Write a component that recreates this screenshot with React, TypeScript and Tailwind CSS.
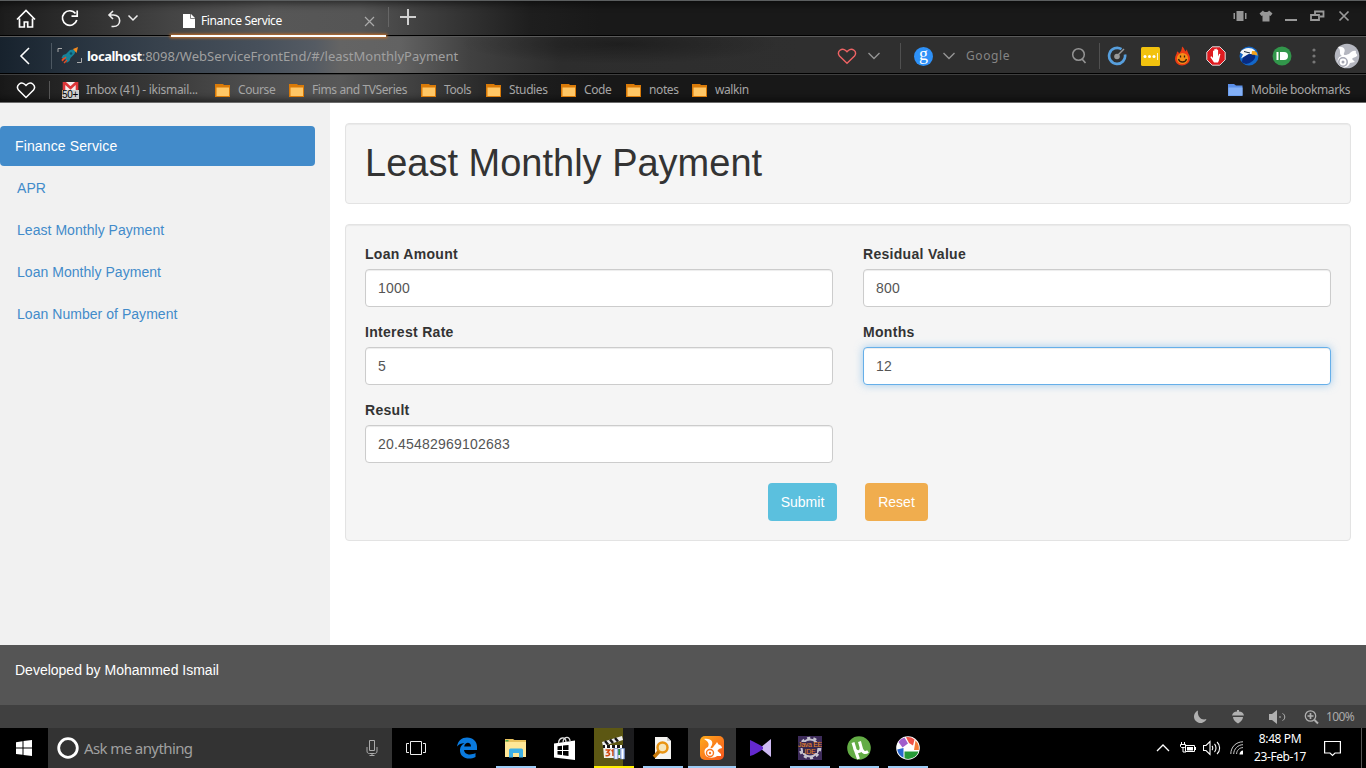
import React from "react";

const UI = "font-['Noto_Sans',sans-serif]";

type IcoProps = { w: number; h: number; c?: string; children: React.ReactNode };
function Ico({ w, h, c = "", children }: IcoProps) {
  return (
    <svg width={w} height={h} viewBox={`0 0 ${w} ${h}`} fill="none" className={"shrink-0 " + c}>
      {children}
    </svg>
  );
}

function TabStrip() {
  return (
    <div className="relative z-10 flex h-[36px] items-start border-t border-b border-t-[#5c5f60] border-b-black bg-[linear-gradient(90deg,#1c1c1c_0,#2c2c2c_70px,#444_170px,#575757_270px,#555_360px,#3d3d3d_430px,#1e1e1e_530px,#191919_600px)] shadow-[inset_0_8px_8px_-6px_#0009]">
      <Ico w={20} h={20} c="mt-[8px] ml-[16px]">
        <path d="M1 10.500 10 1.500l9 9M3.500 9.500v8.500h4.800v-5h3.400v5h4.800V9.500" stroke="#fff" strokeWidth="1.700" />
      </Ico>
      <Ico w={20} h={20} c="mt-[8px] ml-[24px]">
        <path d="M15.500 4.500A7.300 7.300 0 1 0 16.800 11" stroke="#fff" strokeWidth="1.700" />
        <path d="M17.200 1.500v5.700h-5.700" stroke="#fff" strokeWidth="1.700" />
      </Ico>
      <Ico w={14} h={18} c="mt-[9px] ml-[27px]">
        <path d="M6 1 2 5l4 4M2 5h4.500c8.500 0 8 11.500 0 11.500H4.500" stroke="#eee" strokeWidth="1.600" />
      </Ico>
      <Ico w={12} h={8} c="mt-[13px] ml-[6px]">
        <path d="m1.500 1.500 4.500 4.500 4.500-4.500" stroke="#eee" strokeWidth="1.500" />
      </Ico>
      <div className="ml-[32px] flex h-[36px] w-[215px] flex-col">
        <div className="flex h-[34px] items-start">
          <Ico w={13} h={15} c="mt-[13px] ml-[11px]">
            <path d="M1 0h8l4 4v10H1z" fill="#fff" />
            <path d="M8.500 0v4.500H13" stroke="#666" strokeWidth=".8" />
          </Ico>
          <span className="mt-[11px] ml-[6px] w-[150px] text-[12px] leading-[17px] tracking-[-0.38px] whitespace-nowrap text-white">Finance Service</span>
          <Ico w={11} h={11} c="mt-[15px] ml-[13px]">
            <path d="m1 1 9 9M10 1l-9 9" stroke="#aaa" strokeWidth="1.200" />
          </Ico>
        </div>
        <div className="h-[2px] w-full bg-white shadow-[0_0_3px_1px_#c76f26]" />
      </div>
      <div className="mt-[6px] ml-[2px] h-[20px] w-px bg-[#666]" />
      <Ico w={16} h={16} c="mt-[8px] ml-[11px]">
        <path d="M8 0v16M0 8h16" stroke="#d0d0d0" strokeWidth="2" />
      </Ico>
      <div className="mt-[8px] mr-[16px] ml-auto flex items-start">
        <Ico w={14} h={14} c="-ml-px">
          <path d="M3.500 2h7v10h-7zM.5 4H2v6H.5zM12 4h1.500v6H12z" fill="#969696" />
        </Ico>
        <Ico w={14} h={14} c="ml-[12px]">
          <path d="M4 1.500c1 2 5 2 6 0l3.500 3-2 2.500L10.500 6.500V12.500h-7V6.500L2.500 7 .5 4.500z" fill="#969696" />
        </Ico>
        <Ico w={13} h={14} c="ml-[12px]">
          <path d="M0 11h12" stroke="#999" strokeWidth="2" />
        </Ico>
        <Ico w={15} h={14} c="ml-[12px]">
          <path d="M1 6h8v5H1zM5 5V2.500h8.500v5H10" stroke="#999" strokeWidth="1.800" />
        </Ico>
        <Ico w={12} h={14} c="ml-[13px]">
          <path d="m1.500 2.500 9 9M10.500 2.500l-9 9" stroke="#999" strokeWidth="1.700" />
        </Ico>
      </div>
    </div>
  );
}

function Chevron({ c }: { c: string }) {
  return (
    <Ico w={14} h={10} c={c}>
      <path d="m1.500 2 5.500 5.500L12.500 2" stroke="#949494" strokeWidth="1.400" />
    </Ico>
  );
}

function AddressBar() {
  return (
    <div className="flex h-[38px] items-center border-b border-black bg-[radial-gradient(ellipse_160px_20px_at_620px_8px,#0005,transparent),linear-gradient(90deg,#17222d_0,#26323e_70px,#38424d_160px,#47505b_260px,#555b63_315px,#646464_340px,#626262_400px,#414141_470px,#2d2d2d_560px,#2f2f2f_800px)] pt-[3px] shadow-[inset_0_1px_0_#5a5a5a]">
      <Ico w={12} h={20} c="ml-[19px]">
        <path d="m10 2-8 8 8 8" stroke="#fff" strokeWidth="1.600" />
      </Ico>
      <div className="ml-[20px] h-[26px] w-px bg-[#4d5862]" />
      <Ico w={26} h={20} c="ml-[5px]">
        <path d="M1 6V2.500h4M20 16.500h4.500V12" stroke="#aaa" strokeWidth="1" />
        <path d="m19 3-6 1-4 4-3 1-1.500 3 3 0 2 3 0 2 3-2 1-3 4-4z" fill="#16839a" />
        <path d="m16 3 5-2-1.500 6z" fill="#f58a1f" />
        <path d="m9 11-4 4M10 14l-3 3M7 12l-2 2" stroke="#e34d26" strokeWidth="1.500" />
        <circle cx="14" cy="7.500" r="1.300" fill="#0c4e64" />
      </Ico>
      <span className="ml-[4px] w-[400px] text-[13px] leading-[18px] tracking-[0.02px] whitespace-nowrap text-[#a0a0a0]">
        <b className="tracking-[-0.5px] text-white">localhost</b>:8098/WebServiceFrontEnd/#/leastMonthlyPayment
      </span>
      <div className="ml-auto flex items-center">
        <Ico w={20} h={18}>
          <path d="M10 16.200 2.500 9C-.8 4.500 5 .2 8.700 3.500L10 4.700l1.300-1.200C15 .2 20.800 4.500 17.500 9z" stroke="#ee6364" strokeWidth="1.400" />
        </Ico>
        <Chevron c="ml-[10px]" />
        <div className="ml-[19px] h-[26px] w-px bg-[#505050]" />
        <div className="ml-[13px] flex size-[19px] justify-center rounded-full bg-[#2e91f8] font-['Liberation_Serif',serif] text-[18px] leading-[14px] text-white">g</div>
        <Chevron c="ml-[9px]" />
        <span className="ml-[10px] w-[104px] text-[12px] tracking-[0.6px] text-[#858585]">Google</span>
        <Ico w={16} h={18} c="ml-[1px]">
          <circle cx="7.500" cy="7.500" r="5.800" stroke="#949494" strokeWidth="1.500" />
          <path d="m11 12 3.500 4" stroke="#949494" strokeWidth="1.600" />
        </Ico>
        <div className="ml-[12px] h-[26px] w-px bg-[#505050]" />
        <Ico w={20} h={20} c="ml-[7px]">
          <path d="M14.500 3.200A8 8 0 1 0 18 8.500" stroke="#579fdd" strokeWidth="2.700" />
          <circle cx="10" cy="10.500" r="2.800" fill="#999" />
          <path d="m11 9 6-6" stroke="#999" strokeWidth="1.500" />
        </Ico>
        <Ico w={19} h={19} c="ml-[14px]">
          <rect width="19" height="19" rx="1.500" fill="#f2c20e" />
          <circle cx="4" cy="9.500" r="1.500" fill="#fff" />
          <circle cx="8.500" cy="9.500" r="1.500" fill="#fff" />
          <circle cx="13" cy="9.500" r="1.500" fill="#fff" />
          <path d="M16 6h.8v7H16z" fill="#fff" />
        </Ico>
        <Ico w={17} h={20} c="ml-[14px]">
          <path d="M8 .5c3 2 2 4 4 5 0-1 .5-2 1-2 0 3 3 5 3 9 0 4-4 7-8 7s-7-3-7-7c0-3 2-4 2-7 1 0 2 1 2 2 2-2 3-4 3-7z" fill="#ed3a14" />
          <circle cx="8.500" cy="12.500" r="5.600" fill="#f58e18" />
          <path d="M6.500 9.500v2M10.500 9.500v2M4.500 13c1 4 7 4 8 0" stroke="#37230c" strokeWidth="1.300" />
        </Ico>
        <Ico w={20} h={20} c="ml-[15px]">
          <path d="M6.200.8h7.600l5.400 5.400v7.600l-5.400 5.400H6.200L.8 13.800V6.200z" fill="#df1b20" stroke="#ddd" />
          <path d="M8 16.500 4.300 11l1.200-.8L7 12V5q.6-.9 1.200 0v4-5.500q.7-.9 1.300 0V9 3q.7-.9 1.300 0v6-5q.7-.9 1.300 0v6.500l1-2.500q1-.7 1.300.3l-1.500 6.200L12 16.500z" fill="#fff" />
        </Ico>
        <Ico w={20} h={20} c="ml-[13px]">
          <circle cx="10" cy="10" r="9.500" fill="#1367c9" />
          <path d="M3 16.500C3 10 8 7 15 8.500c4 3-3 9-8 9.500z" fill="#072b82" />
          <path d="M1 6.500c3-5 11-6 15-2l-1.500 3.500-5 0L2 12.500l2-4z" fill="#f3f5f6" />
          <path d="M13 5c4-.5 5.500 1 5.500 5-2-2-4-1-6-1.500z" fill="#f6a21b" />
          <path d="m5 5.500 6 1.500" stroke="#17283b" />
        </Ico>
        <Ico w={20} h={20} c="ml-[13px]">
          <circle cx="10" cy="10" r="9.500" fill="#32964b" />
          <path d="M4.500 6h2v8h-2zM8 6h4a4 4 0 0 1 0 8H8z" fill="#fff" />
        </Ico>
        <Ico w={4} h={18} c="ml-[20px]">
          <circle cx="2" cy="3" r="1.600" fill="#777" />
          <circle cx="2" cy="9" r="1.600" fill="#777" />
          <circle cx="2" cy="15" r="1.600" fill="#777" />
        </Ico>
        <Ico w={26} h={26} c="mr-[6px] ml-[18px]">
          <circle cx="13" cy="13" r="12.300" fill="#b5b7c0" />
          <path d="M4 4c6-1 8 3 6 6-1 3 2 2 5 1 2-2 4-4 7-3-1 3 2 3 1 5-2 2-4 1-5 3l3 3-5 1c-1 4-6 6-10 3-5-5-1-10 2-10-4-2 0-5-4-9z" fill="#fff" />
          <circle cx="9" cy="19" r="4.200" stroke="#a5a7b3" strokeWidth="1.500" />
          <circle cx="9" cy="19" r="1.500" fill="#a5a7b3" />
        </Ico>
      </div>
    </div>
  );
}

const folders: [string, string][] = [
  ["Course", "w-[74px]"],
  ["Fims and TVSeries", "w-[132px]"],
  ["Tools", "w-[65px]"],
  ["Studies", "w-[75px]"],
  ["Code", "w-[65px]"],
  ["notes", "w-[66px]"],
  ["walkin", "w-[74px]"],
];

function BookmarkBar() {
  return (
    <div className="flex h-[29px] items-center border-y border-t-[#3f3f3f] border-b-[#6c6c6c] bg-[linear-gradient(90deg,#191919_0,#242424_60px,#373737_150px,#505050_260px,#585858_340px,#3b3b3b_430px,#1e1e1e_520px,#181818_600px)] pt-[3px] text-[12px] text-[#a5a5a5] shadow-[inset_0_-8px_8px_-6px_#0009]">
      <Ico w={20} h={18} c="ml-[16px]">
        <path d="M10 16.500 2.500 9C-.8 4.500 5 0 8.700 3.300L10 4.500l1.300-1.200C15 0 20.800 4.500 17.500 9z" stroke="#fff" strokeWidth="1.500" />
      </Ico>
      <div className="ml-[13px] h-[18px] w-px bg-[#555]" />
      <div className="ml-[12px] flex h-[17px] w-[18px] flex-col">
        <Ico w={18} h={8}>
          <path d="M1 0h15v8H1z" fill="#f5eeee" />
          <path d="M2 8V0l6.500 6L15 0v8" stroke="#dc3639" strokeWidth="2.600" />
        </Ico>
        <span className="h-[9px] w-[17px] bg-[#ccc] font-['Liberation_Sans',sans-serif] text-[10px] leading-[9px] tracking-[-0.3px] text-black">50+</span>
      </div>
      <span className="ml-[6px] w-[129px] tracking-[-0.28px] whitespace-nowrap">Inbox (41) - ikismail...</span>
      {folders.map(([name, width]) => (
        <div key={name} className={"flex shrink-0 items-center " + width}>
          <Ico w={16} h={14}>
            <path d="M0 1h8l1 1h6v12H0z" fill="#d97a08" />
            <path d="M1.500 4.500h12.500V13H1.500z" fill="#ffc766" />
          </Ico>
          <span className="ml-[7px] tracking-[-0.4px] whitespace-nowrap">{name}</span>
        </div>
      ))}
      <div className="mr-[16px] ml-auto flex items-center">
        <Ico w={16} h={14}>
          <path d="M0 1h6l2 1.500h6.500V13H0z" fill="#5b8fe8" />
          <path d="M.5 4.500h14V12.500H.5z" fill="#83b0f6" />
        </Ico>
        <span className="ml-[7px] w-[99px] tracking-[-0.36px] whitespace-nowrap">Mobile bookmarks</span>
      </div>
    </div>
  );
}

function Field({ label, value, focus = false }: { label: string; value: string; focus?: boolean }) {
  return (
    <label className="block w-[468px]">
      <span className="mb-[5px] block leading-5 font-bold tracking-[0.3px]">{label}</span>
      <input
        defaultValue={value}
        className={
          "block h-[38px] w-full rounded-[4px] border bg-white px-3 text-[14px] tracking-[0.2px] text-[#555] outline-none " +
          (focus
            ? "border-[#66afe9] shadow-[inset_0_1px_1px_rgba(0,0,0,.075),0_0_8px_rgba(102,175,233,.6)]"
            : "border-[#ccc] shadow-[inset_0_1px_1px_rgba(0,0,0,.075)]")
        }
      />
    </label>
  );
}

function Page() {
  return (
    <div className="flex h-[542px] bg-white font-['Liberation_Sans',Arial,sans-serif] text-[14px] text-[#333]">
      <nav className="w-[330px] bg-[#f1f1f1] pt-[23px] text-[#428bca]">
        <div className="flex h-[40px] w-[315px] items-center rounded-[4px] bg-[#428bca] pl-[15px] tracking-[0.13px] text-white">Finance Service</div>
        {["APR", "Least Monthly Payment", "Loan Monthly Payment", "Loan Number of Payment"].map((t) => (
          <div key={t} className="mt-[2px] flex h-[40px] items-center pt-px pl-[17px] tracking-[0.04px]">{t}</div>
        ))}
      </nav>
      <main className="w-[1036px] px-[15px] pt-[20px]">
        <div className="h-[81px] rounded-[4px] border border-[#e3e3e3] bg-[#f5f5f5] px-[19px] pt-[18px] shadow-[inset_0_1px_1px_rgba(0,0,0,.05)]">
          <h1 className="text-[38px] leading-[42px]">Least Monthly Payment</h1>
        </div>
        <div className="mt-[20px] h-[317px] rounded-[4px] border border-[#e3e3e3] bg-[#f5f5f5] px-[19px] pt-[19px] shadow-[inset_0_1px_1px_rgba(0,0,0,.05)]">
          <div className="grid grid-cols-[468px_468px] gap-x-[30px] gap-y-[15px]">
            <Field label="Loan Amount" value="1000" />
            <Field label="Residual Value" value="800" />
            <Field label="Interest Rate" value="5" />
            <Field label="Months" value="12" focus />
            <Field label="Result" value="20.45482969102683" />
          </div>
          <div className="mt-[20px] ml-[403px] flex gap-[28px] text-white">
            <button className="h-[38px] w-[69px] rounded-[4px] bg-[#5bc0de]">Submit</button>
            <button className="h-[38px] w-[63px] rounded-[4px] bg-[#f0ad4e]">Reset</button>
          </div>
        </div>
      </main>
    </div>
  );
}

function StatusBar() {
  return (
    <div className="flex h-[23px] items-center justify-end bg-[#404040] pr-[11px] text-[12px] text-[#aaa]">
      <Ico w={14} h={14}>
        <path d="M5 .5A6.500 6.500 0 1 0 13.500 9C8 11 4 6 5 .5z" fill="#b0b0b0" />
      </Ico>
      <Ico w={12} h={16} c="ml-[25px]">
        <path d="M5 1h2v1.500c2.500 0 4.500 1.500 5 4H0C.5 4 2.500 2.500 5 2.500zM1 8h10c0 3-2.500 5-5 6.500C3.500 13 1 11 1 8z" fill="#b0b0b0" />
      </Ico>
      <Ico w={19} h={16} c="ml-[24px]">
        <path d="M1 5h3l5-4v14l-5-4H1z" fill="#b0b0b0" />
        <path d="M11 8h2M14.500 4.500c3 1 3 6 0 7" stroke="#b0b0b0" />
      </Ico>
      <Ico w={15} h={16} c="ml-[17px]">
        <circle cx="6.500" cy="7" r="5.200" stroke="#b0b0b0" strokeWidth="1.300" />
        <path d="M6.500 4v6M3.500 7h6" stroke="#b0b0b0" strokeWidth="1.700" />
        <path d="m10.500 11 3.500 3.500" stroke="#b0b0b0" strokeWidth="2" />
      </Ico>
      <span className="ml-[7px] w-[29px] tracking-[-0.6px]">100%</span>
    </div>
  );
}

type AppProps = { children: React.ReactNode; c: string };
function TaskApp({ children, c }: AppProps) {
  return <div className={"flex h-[40px] shrink-0 items-center justify-center border-b-2 pt-[2px] " + c}>{children}</div>;
}

function Taskbar() {
  return (
    <div className="flex h-[40px] items-center bg-black">
      <div className="flex w-[48px] justify-center">
        <Ico w={16} h={16}>
          <path d="M0 2.200 6.500 1.200v6.200H0zM7.500 1.100 16 0v7.400H7.500zM0 8.500h6.500v6.300L0 13.900zM7.500 8.500H16V16l-8.500-1.100z" fill="#fff" />
        </Ico>
      </div>
      <div className="flex h-full w-[344px] items-center bg-[#333] pl-[9px]">
        <Ico w={22} h={22}>
          <circle cx="11" cy="11" r="9.300" stroke="#fff" strokeWidth="2.800" />
        </Ico>
        <span className="ml-[5px] w-[270px] text-[15px] tracking-[-0.6px] text-[#a0a0a0]">Ask me anything</span>
        <Ico w={12} h={18} c="ml-[12px]">
          <path d="M3.500 1.500h5v10h-5zM1 8v4c0 2 1 2.500 2.500 2.500h5c1.500 0 2.500-.5 2.500-2.500V8M6 14.500v2M3.500 16.500h5" stroke="#aaa" />
        </Ico>
      </div>
      <TaskApp c="w-[48px] border-transparent">
        <Ico w={20} h={14}>
          <path d="M4.500.5h11v13h-11zM3 2.500H.5v9H3M17 2.500h2.500v9H17" stroke="#eee" />
        </Ico>
      </TaskApp>
      <TaskApp c="ml-[6px] w-[42px] border-transparent">
        <Ico w={20} h={22}>
          <path d="M0 9.500C1 3.500 5 .5 10 .5c6 0 10 4 10 9V13H7c.5 5 7 5.500 11.500 3v4c-8 4-16 0-15.500-7.500C3.200 9.500 5 7.500 7.500 6 4 6.300 1.500 7.500 0 9.500zM7.200 9.500H14c0-5-6-5-6.800 0z" fill="#0a7ade" />
        </Ico>
      </TaskApp>
      <TaskApp c="ml-[8px] w-[40px] border-[#9dcbf5]">
        <Ico w={23} h={20} c="-ml-px">
          <path d="M1 1h8l1.500 1H22v17H1z" fill="#e8c15d" />
          <path d="M1 4h21v15H1z" fill="#ffe797" />
          <path d="M5 19.500v-7.500q0-1.500 1.500-1.500h11q1.500 0 1.500 1.500v7.500h-4V15H9v4.500z" fill="#3eb0e5" />
          <path d="M1.500 2h3v1.500h-3z" fill="#4aa84d" />
        </Ico>
      </TaskApp>
      <TaskApp c="ml-[8px] w-[42px] border-transparent">
        <Ico w={22} h={24}>
          <path d="M0 7.500 21 4.500V24L0 21.500z" fill="#fff" />
          <path d="M4.500 7C5 1 12 0 12 6M9 6.500C9.500 0 16 0 16 5" stroke="#ddd" strokeWidth="1.300" />
          <path d="m3.500 10.300 4.500-.6V14H3.500zM9 9.600l5.500-.7V14H9zM3.500 15H8v4l-4.500-.5zM9 15h5.500v5L9 19.300z" fill="#000" />
        </Ico>
      </TaskApp>
      <TaskApp c="ml-[8px] w-[40px] border-[#fff000] bg-[linear-gradient(90deg,#5c5713_29px,#1c1c1e_29px)]">
        <Ico w={24} h={24}>
          <path d="m0 6 20-6 1 4L1 10z" fill="#eee" />
          <path d="m3 5 3 3.500M8 3.500l3 3.500M13 2l3 3.500" stroke="#151515" strokeWidth="2.500" />
          <path d="M1 9h20v13H2z" fill="#f1f0e9" />
          <path d="M1 9h20v3H1z" fill="#161616" />
          <path d="M4 9v3M9 9v3M14 9v3M19 9v3" stroke="#fff" strokeWidth="2" />
          <path d="M3.500 14h4l-2 2.500c3 0 3 4-2 3M9.500 15l1.500-1v6" stroke="#d3480d" strokeWidth="1.600" />
          <path d="M17 13v6" stroke="#28963b" strokeWidth="2" />
          <path d="M12 12.500h4V23h-4zM18.500 12.500h4V23h-4z" fill="#b9cdf7" stroke="#7187bc" strokeWidth=".7" />
          <path d="M14 13v10M20.500 13v10" stroke="#fff" strokeWidth="1.300" />
        </Ico>
      </TaskApp>
      <TaskApp c="ml-[9px] w-[40px] border-[#9dcbf5]">
        <Ico w={20} h={24} c="-ml-[3px]">
          <path d="M3 1h12l4 4v18H3z" fill="#f5f4f1" />
          <path d="M15 1v4h4" fill="#ccc" />
          <circle cx="10.500" cy="11.500" r="5" fill="#f6e6bc" stroke="#e99413" strokeWidth="2.500" />
          <path d="m7 15.500-5 5.500" stroke="#c67709" strokeWidth="3.500" />
        </Ico>
      </TaskApp>
      <TaskApp c="ml-[5px] w-[48px] border-[#9dcbf5] bg-[#353535]">
        <Ico w={24} h={24}>
          <defs>
            <linearGradient id="uc" x1="0" y1="0" x2="1" y2="1">
              <stop stopColor="#ffac1c" />
              <stop offset="1" stopColor="#f6531d" />
            </linearGradient>
          </defs>
          <rect width="24" height="24" rx="5" fill="url(#uc)" />
          <path d="M4 3c8-1 10 4 7 7.500-1 2 0 2 2 1 1-2.500 3-3 4-5.500l1.500 2.500c2.500.5 3.500 2 3.500 3.500-2 1-3 0-4.500 3l3.500 3v2H17c-2 2-8 2.500-11 0-3-5-1-8 2-9 2-4-1-6-4-8z" fill="#fff" />
          <circle cx="10" cy="17" r="3.500" stroke="#fa7722" strokeWidth="1.400" />
          <circle cx="10" cy="17" r="1.200" fill="#fa7722" />
        </Ico>
      </TaskApp>
      <TaskApp c="ml-[4px] w-[40px] border-transparent">
        <Ico w={21} h={18}>
          <path d="m21 0-11 9 11 9z" fill="#cebaf2" />
          <path d="M0 1c4 1.500 9 4.500 13 7v2C9 13 4 16 0 17z" fill="#6429cf" />
        </Ico>
      </TaskApp>
      <TaskApp c="ml-[10px] w-[40px] border-[#9dcbf5]">
        <div className="relative size-[24px] overflow-hidden bg-[#3d2b5a]">
          <Ico w={24} h={24}>
            <circle cx="12" cy="12" r="8.500" stroke="#c7c4cf" strokeWidth="2" />
            <circle cx="12" cy="12" r="10.200" stroke="#c7c4cf" strokeWidth="2.200" strokeDasharray="3.200 3.200" />
            <path d="M0 6h24v6H0zM5 10h14v7H5z" fill="#36274e" />
          </Ico>
          <div className="absolute inset-x-[-4px] top-[5px] text-center font-['Liberation_Sans',sans-serif] text-[7px] leading-[7px] tracking-[-0.3px] text-[#f08a28]">
            Java EE<br />IDE
          </div>
        </div>
      </TaskApp>
      <TaskApp c="ml-[9px] w-[40px] border-[#9dcbf5]">
        <Ico w={24} h={24}>
          <circle cx="12" cy="12" r="11.800" fill="#63ac45" />
          <path d="M6 6.500 8 13l3.500 10M7.500 12c1.500 5.500 7.500 4.500 6.500-1L12.500 5.500M14 11c1 5.500 4 6.500 7 4.500" stroke="#fff" strokeWidth="3" />
        </Ico>
      </TaskApp>
      <TaskApp c="ml-[9px] w-[40px] border-[#9dcbf5]">
        <Ico w={24} h={24}>
          <circle cx="12" cy="12" r="11.800" fill="#fff" />
          <path d="M2.500 6A11 11 0 0 1 8.500 1.500l3.500 6-5.500 4z" fill="#a05dcc" />
          <path d="M10 1.200A11 11 0 0 1 18.500 3.500L17 9.500 13 7z" fill="#ee5147" />
          <path d="M19.500 4.500A11 11 0 0 1 22.800 14H18z" fill="#f37b37" />
          <path d="M22.500 15.500A11 11 0 0 1 8.500 22.300V15.500z" fill="#269b37" />
          <path d="M1.200 13.500 7.500 12v9.800A11 11 0 0 1 1.200 13.500z" fill="#2868cf" />
        </Ico>
      </TaskApp>
      <div className="ml-auto flex h-full items-center">
        <Ico w={14} h={8}>
          <path d="m1 7 6-6 6 6" stroke="#fff" strokeWidth="1.300" />
        </Ico>
        <Ico w={17} h={12} c="ml-[10px]">
          <path d="M5.500 3.500h9v6h-9zM1.500 0v2M4.500 0v2M.5 2.500h5v2l-1 1h-3l-1-1zM3 6v4h3M15.500 5v3" stroke="#fff" />
          <path d="M7 5h6v3.500H7z" fill="#fff" />
        </Ico>
        <Ico w={18} h={16} c="ml-[6px]">
          <path d="M.5 5.500H3l4-4v13l-4-4H.5zM9 6c1 1 1 3 0 4M11.500 4c2 2 2 6 0 8M14 2c3.500 3 3.500 9 0 12" stroke="#fff" strokeWidth="1.100" />
        </Ico>
        <Ico w={14} h={14} c="ml-[9px]">
          <path d="M.8 13C.8 6 6 .8 13 .8M3.700 13c0-5 4.300-9.300 9.300-9.300M6.600 13c0-3.500 2.900-6.400 6.400-6.400" stroke="#ccc" />
          <path d="M9.500 13.500c0-2 1.500-4 3.500-4v4z" fill="#fff" />
        </Ico>
        <div className="ml-[8px] flex w-[56px] flex-col items-center text-[12px] leading-[18px] tracking-[-0.4px] whitespace-nowrap text-white">
          <span>8:48 PM</span>
          <span>23-Feb-17</span>
        </div>
        <Ico w={17} h={17} c="ml-[16px]">
          <path d="M.6 1.500h15.800v11.500h-5.400L8.500 15.500 6 13H.6z" stroke="#fff" strokeWidth="1.200" />
        </Ico>
        <div className="ml-[20px] h-full w-px bg-[#555]" />
        <div className="w-[4px]" />
      </div>
    </div>
  );
}

export default function App() {
  return (
    <div className={"h-[768px] w-[1366px] overflow-hidden bg-black " + UI}>
      <TabStrip />
      <AddressBar />
      <BookmarkBar />
      <Page />
      <footer className="h-[60px] bg-[#555] pt-[15px] pl-[15px] font-['Liberation_Sans',Arial,sans-serif] text-[14px] leading-5 text-white">
        Developed by Mohammed Ismail
      </footer>
      <StatusBar />
      <Taskbar />
    </div>
  );
}
